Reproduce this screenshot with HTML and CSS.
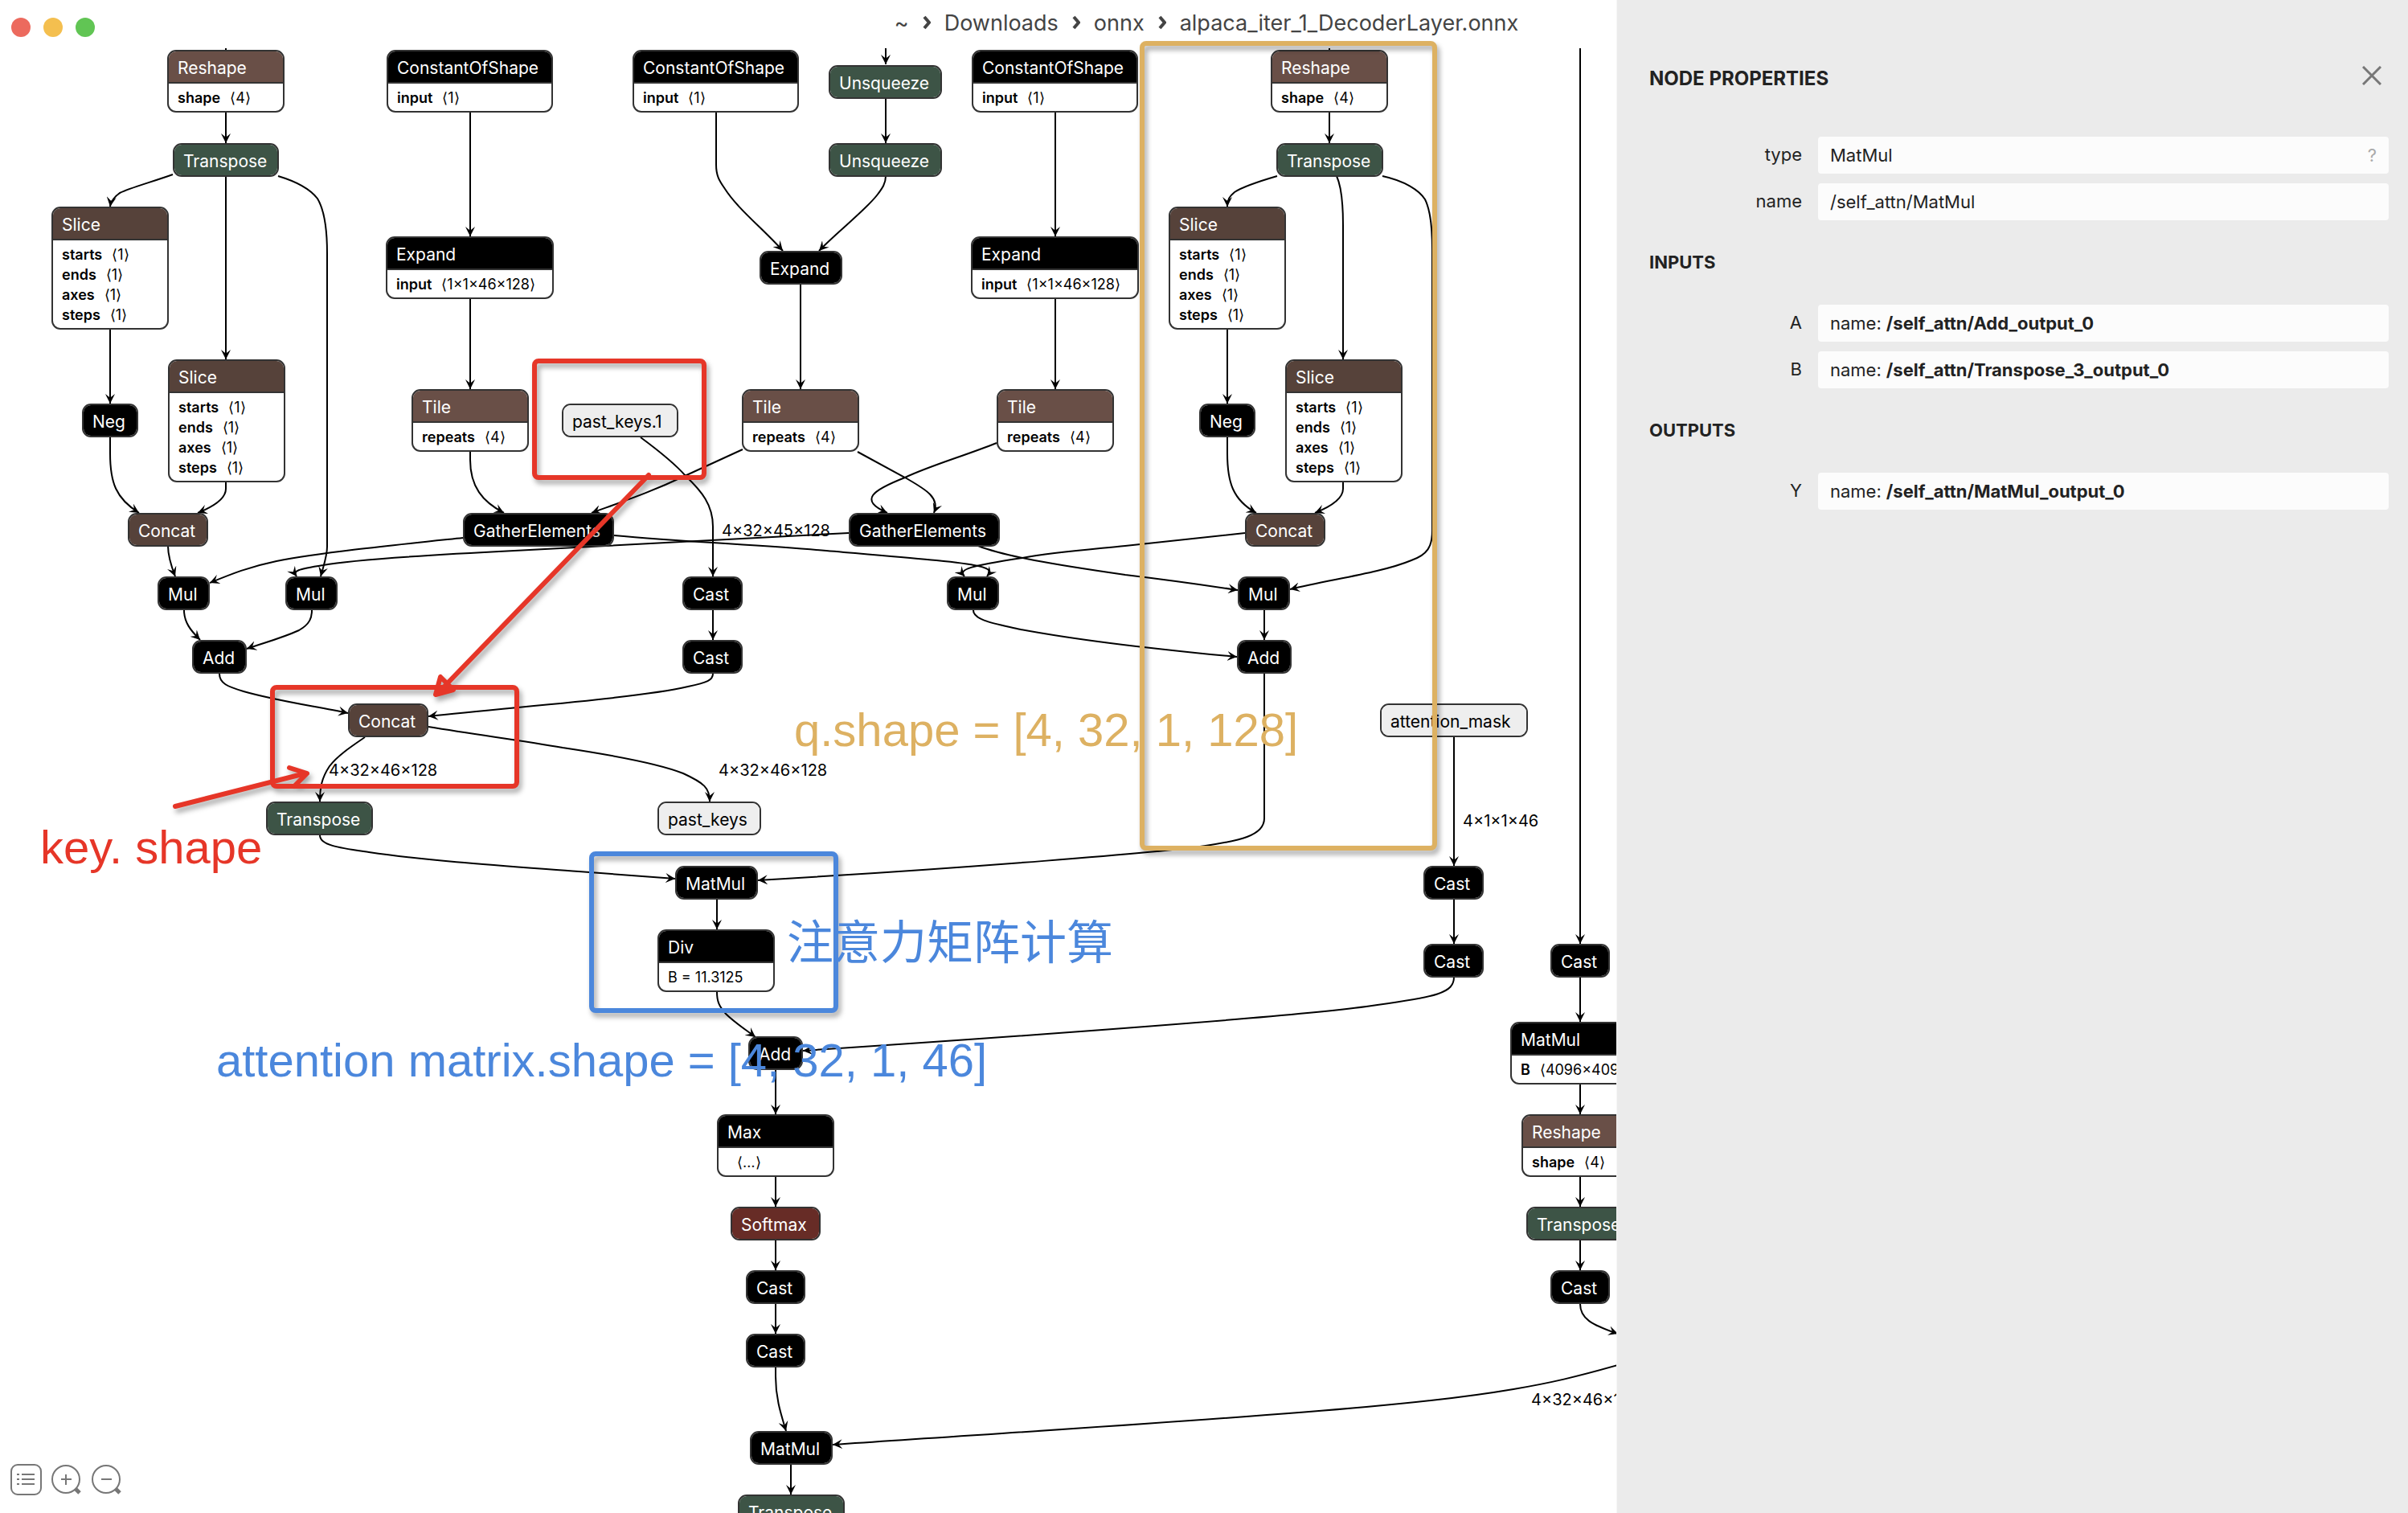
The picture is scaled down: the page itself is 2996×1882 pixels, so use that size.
FILE: index.html
```html
<!DOCTYPE html>
<html lang="en">
<head>
<meta charset="utf-8">
<title>alpaca_iter_1_DecoderLayer.onnx</title>
<link rel="stylesheet" href="styles.css">
</head>
<body>
<div class="window">
  <main class="canvas">
    <div class="graph">
      <svg class="edges" aria-hidden="true">
        <defs>
          <marker id="vee" viewBox="0 0 10 10" refX="10" refY="5" markerUnits="userSpaceOnUse" markerWidth="12" markerHeight="12" orient="auto"><path d="M0 0L10 5L0 10L4 5z"/></marker>
        </defs>
        <g class="edge">
          <path d="M281 40V62"/>
          <path d="M281 140V178"/>
          <path d="M215 217C190 226 161 234 149 240C142 245 138 250 137 257"/>
          <path d="M281 219V447"/>
          <path d="M346 219C366 225 385 234 395 247C404 262 407 285 407 315V680C407 692 403 702 399 717"/>
          <path d="M137 409V502"/>
          <path d="M137 544V564C137 600 144 620 173 638"/>
          <path d="M281 599V608C281 620 266 630 246 638"/>
          <path d="M209 679C209 692 213 704 218 717"/>
          <path d="M576 669C500 677 400 687 344 698C310 705 288 714 261 725"/>
          <path d="M1056 663L640 685C540 690 440 696 402 703C370 708 364 710 369 717"/>
          <path d="M229 759C229 774 237 784 249 796"/>
          <path d="M388 759C388 768 386 776 372 784C350 794 330 799 307 807"/>
          <path d="M273 838C273 850 283 854 303 860C345 872 390 878 433 887"/>
          <path d="M585 140V294"/>
          <path d="M585 372V484"/>
          <path d="M585 562V572C585 605 600 624 627 638"/>
          <path d="M891 140V205C891 220 896 226 902 235C918 260 950 285 974 312"/>
          <path d="M1102 40V80"/>
          <path d="M1102 122V178"/>
          <path d="M1102 219C1102 228 1098 234 1091 243C1075 263 1042 288 1019 312"/>
          <path d="M996 354V484"/>
          <path d="M1313 140V294"/>
          <path d="M1313 372V484"/>
          <path d="M797 544C820 561 840 577 853 592C873 611 887 628 887 655V717"/>
          <path d="M924 559L852 592C810 612 780 622 736 638"/>
          <path d="M1067 562L1126 594C1150 608 1170 618 1162 638"/>
          <path d="M1240 551C1200 567 1155 580 1126 594C1085 610 1068 622 1104 638"/>
          <path d="M887 759V796"/>
          <path d="M887 838C887 846 880 849 856 854C790 869 640 879 533 891"/>
          <path d="M764 666C850 674 950 678 1028 685C1120 693 1190 698 1217 704C1235 708 1232 712 1228 717"/>
          <path d="M1217 679C1250 692 1310 702 1400 715C1450 721 1500 728 1540 734"/>
          <path d="M1549 663L1400 679C1350 684 1310 687 1272 694C1206 704 1192 708 1200 717"/>
          <path d="M1211 759C1211 772 1240 776 1270 783C1340 796 1430 807 1539 817"/>
          <path d="M1573 759V796"/>
          <path d="M1573 838V1018C1573 1040 1540 1046 1500 1052C1450 1060 1200 1080 943 1095"/>
          <path d="M1654 40V62"/>
          <path d="M1654 140V178"/>
          <path d="M1589 219C1565 226 1545 233 1536 239C1530 244 1527 248 1527 257"/>
          <path d="M1663 219C1669 232 1671 250 1671 280V447"/>
          <path d="M1720 219C1748 225 1766 237 1773 248C1780 262 1782 285 1782 310V660C1782 680 1776 690 1756 697C1720 712 1660 720 1605 733"/>
          <path d="M1527 409V502"/>
          <path d="M1527 544V564C1527 600 1534 622 1563 638"/>
          <path d="M1671 599V608C1671 620 1656 630 1636 638"/>
          <path d="M1809 917V1077"/>
          <path d="M1809 1118V1174"/>
          <path d="M1809 1215C1809 1235 1790 1240 1700 1252C1600 1265 1300 1287 999 1307"/>
          <path d="M454 917C435 930 420 940 410 953C400 968 398 980 398 997"/>
          <path d="M533 904C600 915 650 921 700 930C760 939 820 950 850 962C876 974 883 980 883 997"/>
          <path d="M398 1039C398 1052 425 1055 459 1060C540 1072 640 1078 720 1084L840 1093"/>
          <path d="M892 1119V1156"/>
          <path d="M892 1234C892 1246 895 1252 903 1261C914 1272 928 1281 940 1290"/>
          <path d="M965 1331V1386"/>
          <path d="M965 1464V1501"/>
          <path d="M965 1543V1580"/>
          <path d="M965 1622V1659"/>
          <path d="M965 1701V1712C965 1740 972 1760 978 1780"/>
          <path d="M984 1822V1859"/>
          <path d="M1966 40V1174"/>
          <path d="M1966 1216V1271"/>
          <path d="M1966 1349V1386"/>
          <path d="M1966 1464V1501"/>
          <path d="M1966 1543V1580"/>
          <path d="M1966 1622C1966 1640 1980 1648 2013 1659"/>
          <path d="M2013 1698C1960 1713 1930 1720 1883 1728C1830 1737 1780 1743 1700 1750C1500 1768 1250 1782 1036 1797"/>
        </g>
      </svg>

      <span class="shape" style="left:898px;top:648px">4×32×45×128</span>
      <span class="shape" style="left:409px;top:946px">4×32×46×128</span>
      <span class="shape" style="left:894px;top:946px">4×32×46×128</span>
      <span class="shape" style="left:1820px;top:1009px">4×1×1×46</span>
      <span class="shape" style="left:1905px;top:1729px">4×32×46×128</span>

      <div class="node" style="left:208px;top:62px;width:146px"><div class="op reshape">Reshape</div><div class="attrs"><div><b>shape</b>⟨4⟩</div></div></div>
      <div class="node" style="left:215px;top:178px;width:132px"><div class="op transform">Transpose</div></div>
      <div class="node" style="left:64px;top:257px;width:146px"><div class="op tensor">Slice</div><div class="attrs"><div><b>starts</b>⟨1⟩</div><div><b>ends</b>⟨1⟩</div><div><b>axes</b>⟨1⟩</div><div><b>steps</b>⟨1⟩</div></div></div>
      <div class="node" style="left:209px;top:447px;width:146px"><div class="op tensor">Slice</div><div class="attrs"><div><b>starts</b>⟨1⟩</div><div><b>ends</b>⟨1⟩</div><div><b>axes</b>⟨1⟩</div><div><b>steps</b>⟨1⟩</div></div></div>
      <div class="node" style="left:102px;top:502px;width:70px"><div class="op">Neg</div></div>
      <div class="node" style="left:159px;top:638px;width:100px"><div class="op tensor">Concat</div></div>
      <div class="node" style="left:196px;top:717px;width:65px"><div class="op">Mul</div></div>
      <div class="node" style="left:355px;top:717px;width:65px"><div class="op">Mul</div></div>
      <div class="node" style="left:239px;top:796px;width:68px"><div class="op">Add</div></div>
      <div class="node" style="left:433px;top:875px;width:100px"><div class="op tensor">Concat</div></div>
      <div class="node" style="left:331px;top:997px;width:133px"><div class="op transform">Transpose</div></div>

      <div class="node" style="left:481px;top:62px;width:207px"><div class="op">ConstantOfShape</div><div class="attrs"><div><b>input</b>⟨1⟩</div></div></div>
      <div class="node" style="left:480px;top:294px;width:209px"><div class="op">Expand</div><div class="attrs"><div><b>input</b>⟨1×1×46×128⟩</div></div></div>
      <div class="node" style="left:512px;top:484px;width:146px"><div class="op reshape">Tile</div><div class="attrs"><div><b>repeats</b>⟨4⟩</div></div></div>
      <div class="node" style="left:576px;top:638px;width:188px"><div class="op">GatherElements</div></div>

      <div class="node" style="left:787px;top:62px;width:207px"><div class="op">ConstantOfShape</div><div class="attrs"><div><b>input</b>⟨1⟩</div></div></div>
      <div class="node" style="left:1031px;top:81px;width:141px"><div class="op transform">Unsqueeze</div></div>
      <div class="node" style="left:1031px;top:178px;width:141px"><div class="op transform">Unsqueeze</div></div>
      <div class="node" style="left:945px;top:312px;width:103px"><div class="op">Expand</div></div>
      <div class="node" style="left:923px;top:484px;width:146px"><div class="op reshape">Tile</div><div class="attrs"><div><b>repeats</b>⟨4⟩</div></div></div>
      <div class="node" style="left:699px;top:502px;width:145px"><div class="op value">past_keys.1</div></div>
      <div class="node" style="left:1056px;top:638px;width:188px"><div class="op">GatherElements</div></div>
      <div class="node" style="left:849px;top:717px;width:75px"><div class="op">Cast</div></div>
      <div class="node" style="left:849px;top:796px;width:75px"><div class="op">Cast</div></div>
      <div class="node" style="left:818px;top:997px;width:129px"><div class="op value">past_keys</div></div>

      <div class="node" style="left:1209px;top:62px;width:207px"><div class="op">ConstantOfShape</div><div class="attrs"><div><b>input</b>⟨1⟩</div></div></div>
      <div class="node" style="left:1208px;top:294px;width:209px"><div class="op">Expand</div><div class="attrs"><div><b>input</b>⟨1×1×46×128⟩</div></div></div>
      <div class="node" style="left:1240px;top:484px;width:146px"><div class="op reshape">Tile</div><div class="attrs"><div><b>repeats</b>⟨4⟩</div></div></div>
      <div class="node" style="left:1178px;top:717px;width:65px"><div class="op">Mul</div></div>

      <div class="node" style="left:1581px;top:62px;width:146px"><div class="op reshape">Reshape</div><div class="attrs"><div><b>shape</b>⟨4⟩</div></div></div>
      <div class="node" style="left:1588px;top:178px;width:133px"><div class="op transform">Transpose</div></div>
      <div class="node" style="left:1454px;top:257px;width:146px"><div class="op tensor">Slice</div><div class="attrs"><div><b>starts</b>⟨1⟩</div><div><b>ends</b>⟨1⟩</div><div><b>axes</b>⟨1⟩</div><div><b>steps</b>⟨1⟩</div></div></div>
      <div class="node" style="left:1599px;top:447px;width:146px"><div class="op tensor">Slice</div><div class="attrs"><div><b>starts</b>⟨1⟩</div><div><b>ends</b>⟨1⟩</div><div><b>axes</b>⟨1⟩</div><div><b>steps</b>⟨1⟩</div></div></div>
      <div class="node" style="left:1492px;top:502px;width:70px"><div class="op">Neg</div></div>
      <div class="node" style="left:1549px;top:638px;width:100px"><div class="op tensor">Concat</div></div>
      <div class="node" style="left:1540px;top:717px;width:65px"><div class="op">Mul</div></div>
      <div class="node" style="left:1539px;top:796px;width:68px"><div class="op">Add</div></div>
      <div class="node" style="left:1717px;top:875px;width:184px"><div class="op value">attention_mask</div></div>
      <div class="node" style="left:1771px;top:1077px;width:75px"><div class="op">Cast</div></div>
      <div class="node" style="left:1771px;top:1174px;width:75px"><div class="op">Cast</div></div>

      <div class="node" style="left:840px;top:1077px;width:103px"><div class="op">MatMul</div></div>
      <div class="node" style="left:818px;top:1156px;width:146px"><div class="op">Div</div><div class="attrs"><div>B = 11.3125</div></div></div>
      <div class="node" style="left:931px;top:1289px;width:68px"><div class="op">Add</div></div>
      <div class="node" style="left:892px;top:1386px;width:146px"><div class="op">Max</div><div class="attrs"><div><b></b>⟨…⟩</div></div></div>
      <div class="node" style="left:909px;top:1501px;width:112px"><div class="op activation">Softmax</div></div>
      <div class="node" style="left:928px;top:1580px;width:74px"><div class="op">Cast</div></div>
      <div class="node" style="left:928px;top:1659px;width:74px"><div class="op">Cast</div></div>
      <div class="node" style="left:933px;top:1780px;width:103px"><div class="op">MatMul</div></div>
      <div class="node" style="left:918px;top:1859px;width:133px"><div class="op transform">Transpose</div></div>

      <div class="node" style="left:1929px;top:1174px;width:74px"><div class="op">Cast</div></div>
      <div class="node" style="left:1879px;top:1271px;width:174px"><div class="op">MatMul</div><div class="attrs"><div><b>B</b>⟨4096×4096⟩</div></div></div>
      <div class="node" style="left:1893px;top:1386px;width:146px"><div class="op reshape">Reshape</div><div class="attrs"><div><b>shape</b>⟨4⟩</div></div></div>
      <div class="node" style="left:1899px;top:1501px;width:133px"><div class="op transform">Transpose</div></div>
      <div class="node" style="left:1929px;top:1580px;width:74px"><div class="op">Cast</div></div>
    </div>

    <div class="toolbar">
      <button class="tool" type="button" aria-label="Model properties">
        <svg viewBox="0 0 40 40"><rect x="2" y="2" width="37" height="37" rx="8"/><path d="M9 14h3M15 14h16M9 20h3M15 20h16M9 26h3M15 26h16"/></svg>
      </button>
      <button class="tool" type="button" aria-label="Zoom in">
        <svg viewBox="0 0 40 40"><circle cx="20" cy="20" r="17"/><path d="M14 20h13M20 14v13"/><path class="handle" d="M32 32l5 5"/></svg>
      </button>
      <button class="tool" type="button" aria-label="Zoom out">
        <svg viewBox="0 0 40 40"><circle cx="20" cy="20" r="17"/><path d="M14 20h13"/><path class="handle" d="M32 32l5 5"/></svg>
      </button>
    </div>
  </main>

  <aside class="sidebar">
    <header class="sidebar-head">
      <h1>NODE PROPERTIES</h1>
      <button class="close" type="button" aria-label="Close"><svg viewBox="0 0 24 24"><path d="M1 1L23 23M23 1L1 23"/></svg></button>
    </header>
    <div class="fields">
      <label for="type">type</label>
      <div class="field"><input id="type" value="MatMul" readonly><button class="help" type="button">?</button></div>
      <label for="name">name</label>
      <div class="field"><input id="name" value="/self_attn/MatMul" readonly></div>
    </div>
    <h2>INPUTS</h2>
    <div class="fields">
      <span class="key">A</span>
      <div class="field">name: <b>/self_attn/Add_output_0</b></div>
      <span class="key">B</span>
      <div class="field">name: <b>/self_attn/Transpose_3_output_0</b></div>
    </div>
    <h2>OUTPUTS</h2>
    <div class="fields">
      <span class="key">Y</span>
      <div class="field">name: <b>/self_attn/MatMul_output_0</b></div>
    </div>
  </aside>

  <header class="titlebar">
    <div class="lights"><i class="red"></i><i class="yellow"></i><i class="green"></i></div>
    <nav class="path">
      <span>~</span>
      <svg viewBox="0 0 10 18"><path d="M2 2L8 9L2 16"/></svg>
      <span>Downloads</span>
      <svg viewBox="0 0 10 18"><path d="M2 2L8 9L2 16"/></svg>
      <span>onnx</span>
      <svg viewBox="0 0 10 18"><path d="M2 2L8 9L2 16"/></svg>
      <span>alpaca_iter_1_DecoderLayer.onnx</span>
    </nav>
    <div></div>
  </header>

  <svg class="notes">
    <g class="mark key-note">
      <rect x="665" y="449" width="211" height="145" rx="5"/>
      <rect x="339" y="855" width="304" height="123" rx="5"/>
      <path d="M807 591L545 862M548 842L542 864L564 858z"/>
      <path d="M218 1003L380 962M360 955L382 962L366 978"/>
    </g>
    <rect class="mark query-note" x="1421" y="54" width="364" height="1001" rx="5"/>
    <rect class="mark attn-note" x="736" y="1062" width="304" height="195" rx="5"/>
    <text class="note key-note" x="50" y="1074">key. shape</text>
    <text class="note query-note" x="988" y="928">q.shape = [4, 32, 1, 128]</text>
    <text class="note attn-note" x="269" y="1339">attention matrix.shape = [4, 32, 1, 46]</text>
    <text class="note attn-note" x="979" y="1193">注意力矩阵计算</text>
  </svg>
</div>
</body>
</html>
```
FILE: styles.css
```css
* { box-sizing: border-box; }

body {
  margin: 0;
  background: #fff;
  font-family: Inter, "Noto Sans", sans-serif;
  color: #222;
}

button {
  padding: 0;
  border: 0;
  background: none;
  font: inherit;
  color: inherit;
}

.window {
  display: grid;
  grid-template-columns: minmax(0, 1fr) 985px;
  grid-template-rows: 60px minmax(0, 1fr);
  height: 100vh;
  overflow: hidden;
}

/* title bar */
.titlebar {
  grid-area: 1 / 1 / 2 / 3;
  display: grid;
  grid-template-columns: 1fr auto 1fr;
}

.lights {
  display: flex;
  gap: 16px;
  padding: 22px 14px;
}

.lights i {
  width: 24px;
  height: 24px;
  border-radius: 50%;
}

.red { background: #ec6a5e; }
.yellow { background: #f4bf4f; }
.green { background: #61c554; }

.path {
  display: flex;
  align-items: center;
  gap: 17px;
  height: 56px;
  padding-left: 6px;
  font-size: 27px;
  color: #444;
}

.path svg {
  width: 10px;
  height: 18px;
  fill: none;
  stroke: #444;
  stroke-width: 4;
}

/* graph */
.canvas {
  grid-area: 2 / 1 / 3 / 2;
  position: relative;
  overflow: hidden;
}

.graph {
  position: absolute;
  top: -60px;
  left: 0;
}

.edges {
  display: block;
  width: 2100px;
  height: 1900px;
}

.edge {
  fill: none;
  stroke: #000;
  stroke-width: 2;
}

.edge path { marker-end: url(#vee); }

.edges marker path {
  fill: #000;
  stroke: none;
}

.node {
  position: absolute;
  border: 2px solid #333;
  border-radius: 11px;
  background: #fff;
  overflow: hidden;
  white-space: nowrap;
  color: #000;
}

.op {
  height: 38px;
  padding-left: 11px;
  background: #000;
  color: #fff;
  font-size: 21px;
  line-height: 41px;
}

.reshape { background: #694f47; }
.tensor { background: #56423a; }
.transform { background: #3d5446; }
.activation { background: #672c26; }
.value { background: #eee; color: #000; }

.attrs {
  padding: 5px 11px 4px;
  border-top: 2px solid #333;
  font-size: 18px;
  line-height: 25px;
}

.attrs b {
  margin-right: 12px;
  font-weight: 600;
}

.shape {
  position: absolute;
  font-size: 20px;
  line-height: 24px;
  color: #000;
}

.toolbar {
  position: absolute;
  left: 12px;
  bottom: 22px;
  display: flex;
  gap: 10px;
}

.tool svg {
  display: block;
  width: 40px;
  height: 40px;
  fill: none;
  stroke: #777;
  stroke-width: 2;
}

.tool .handle { stroke-width: 5; }

/* sidebar */
.sidebar {
  grid-area: 1 / 2 / 3 / 3;
  padding: 80px 24px 0 40px;
  background: #ebebeb;
  border-left: 1px solid #f6f6f6;
  font-size: 22px;
}

.sidebar-head {
  display: flex;
  justify-content: space-between;
  height: 90px;
}

h1 {
  margin: 0;
  font-size: 24px;
  line-height: 36px;
  font-weight: 700;
}

.close {
  align-self: flex-start;
  margin: 2px 9px;
}

.close svg {
  display: block;
  width: 24px;
  height: 24px;
  fill: none;
  stroke: #777;
  stroke-width: 3;
}

h2 {
  margin: 38px 0;
  font-size: 22px;
  line-height: 29px;
  font-weight: 700;
}

.fields {
  display: grid;
  grid-template-columns: 190px minmax(0, 1fr);
  gap: 12px 20px;
}

.fields label,
.key {
  text-align: right;
  line-height: 44px;
}

.field {
  display: flex;
  align-items: center;
  gap: 6px;
  height: 46px;
  padding: 0 15px;
  border-radius: 4px;
  background: #fcfcfc;
}

.field b { font-weight: 700; }

.field input {
  flex: 1;
  min-width: 0;
  padding: 0;
  border: 0;
  background: none;
  font: inherit;
  color: inherit;
}

.help { color: #aaa; }

/* hand-drawn remarks over the graph */
.notes {
  grid-area: 1 / 1 / 3 / 2;
  position: relative;
  width: 100%;
  height: 100%;
  pointer-events: none;
}

.mark {
  fill: none;
  stroke-width: 6;
  stroke-linecap: round;
  stroke-linejoin: round;
  filter: drop-shadow(3px 5px 3px rgba(0, 0, 0, 0.35));
}

.mark.key-note { stroke: #e63628; }
.mark.query-note { stroke: #ddb162; }
.mark.attn-note { stroke: #4b87dc; }

.note {
  font-family: "Liberation Sans", "Noto Sans CJK SC", sans-serif;
  font-size: 58px;
}

.note.key-note { fill: #e63628; }
.note.query-note { fill: #ddb162; }
.note.attn-note { fill: #4b87dc; }
```
